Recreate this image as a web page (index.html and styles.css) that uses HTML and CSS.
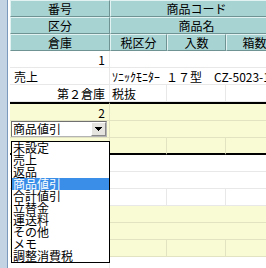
FILE: index.html
```html
<!DOCTYPE html>
<html lang="ja">
    <head>
        <meta charset="UTF-8">
        <meta name="viewport" content="width=device-width, initial-scale=1.0">
        <title>伝票明細</title>
        <link rel="stylesheet" href="styles.css">
    </head>
    <body>
        <div class="page">
            <div class="side"></div>
            <div class="main">
                <table class="grid">
                    <colgroup>
                        <col class="col-a">
                        <col class="col-b">
                        <col class="col-c">
                        <col class="col-d">
                    </colgroup>
                    <thead>
                        <tr>
                            <th>番号</th>
                            <th colspan="3">商品コード</th>
                        </tr>
                        <tr>
                            <th>区分</th>
                            <th colspan="3">商品名</th>
                        </tr>
                        <tr>
                            <th>倉庫</th>
                            <th>税区分</th>
                            <th>入数</th>
                            <th>箱数</th>
                        </tr>
                    </thead>

                    <tbody class="rec">
                        <tr>
                            <td class="first right">1</td>
                            <td colspan="3"></td>
                        </tr>
                        <tr>
                            <td class="first">売上</td>
                            <td colspan="3">ｿﾆｯｸﾓﾆﾀｰ&ensp;１７型&#x3000;CZ-5023-1</td>
                        </tr>
                        <tr>
                            <td class="first right">第２倉庫</td>
                            <td class="line">税抜</td>
                            <td class="line"></td>
                            <td></td>
                        </tr>
                    </tbody>

                    <tbody class="rec alt current">
                        <tr class="top">
                            <td class="first right">2</td>
                            <td colspan="3"></td>
                        </tr>
                        <tr>
                            <td class="first">
                                <div class="combo">
                                    <div class="combo-text">商品値引</div>
                                    <div class="combo-btn">
                                        <svg width="7" height="4" viewBox="0 0 7 4">
                                            <rect x="0" y="0" width="7" height="1"/>
                                            <rect x="1" y="1" width="5" height="1"/>
                                            <rect x="2" y="2" width="3" height="1"/>
                                            <rect x="3" y="3" width="1" height="1"/>
                                        </svg>
                                    </div>
                                    <ul class="options">
                                        <li>未設定</li>
                                        <li>売上</li>
                                        <li>返品</li>
                                        <li class="on">商品値引</li>
                                        <li>合計値引</li>
                                        <li>立替金</li>
                                        <li>運送料</li>
                                        <li>その他</li>
                                        <li>メモ</li>
                                        <li>調整消費税</li>
                                    </ul>
                                </div>
                            </td>
                            <td colspan="3"></td>
                        </tr>
                        <tr class="bottom">
                            <td class="first"></td>
                            <td class="line"></td>
                            <td class="line"></td>
                            <td></td>
                        </tr>
                    </tbody>

                    <tbody class="rec">
                        <tr>
                            <td class="first"></td>
                            <td colspan="3"></td>
                        </tr>
                        <tr>
                            <td class="first"></td>
                            <td colspan="3"></td>
                        </tr>
                        <tr>
                            <td class="first"></td>
                            <td class="line"></td>
                            <td class="line"></td>
                            <td></td>
                        </tr>
                    </tbody>

                    <tbody class="rec alt">
                        <tr>
                            <td class="first"></td>
                            <td colspan="3"></td>
                        </tr>
                        <tr>
                            <td class="first"></td>
                            <td colspan="3"></td>
                        </tr>
                        <tr>
                            <td class="first"></td>
                            <td class="line"></td>
                            <td class="line"></td>
                            <td></td>
                        </tr>
                    </tbody>

                    <tbody class="rec">
                        <tr>
                            <td class="first"></td>
                            <td colspan="3"></td>
                        </tr>
                        <tr>
                            <td class="first"></td>
                            <td colspan="3"></td>
                        </tr>
                    </tbody>
                </table>
            </div>
        </div>
    </body>
</html>
```

FILE: styles.css
```css
* {
    margin: 0;
    padding: 0;
    box-sizing: border-box;
}

html, body {
    overflow: hidden;
}

body {
    background-color: white;
    font-family: "Noto Sans CJK JP", "Noto Sans", sans-serif;
    font-size: 12px;
    color: black;
}

.page {
    display: flex;
    min-height: 268px;
}

.side {
    flex-shrink: 0;
    width: 8px;
    background-color: #c4d3e4;
    border-right: 1px solid #7b98bd;
}

.main {
    padding-left: 2px;
}

.grid {
    border-collapse: separate;
    border-spacing: 0;
    table-layout: fixed;
    width: 273px;
    font-size: 12px;

    tr {
        height: 17px;
    }

    th {
        font-weight: normal;
        line-height: 15px;
        text-align: center;
        background-color: #a8d3d3;
        border-top: 1px solid #e2f1f1;
        border-left: 1px solid #e2f1f1;
        border-right: 1px solid #6f9393;
        border-bottom: 1px solid #6f9393;
        white-space: nowrap;
    }

    td {
        line-height: 15px;
        padding: 0 2px;
        border-bottom: 1px solid rgba(0, 0, 0, 0.09);
        white-space: nowrap;
    }
}

.col-a { width: 100px; }
.col-b { width: 57px; }
.col-c { width: 59px; }
.col-d { width: 57px; }

.grid td.first {
    padding: 0 4px;
    border-right: 1px solid rgba(0, 0, 0, 0.09);
}

.grid td.line {
    border-right: 1px solid rgba(0, 0, 0, 0.09);
}

.grid td.right {
    text-align: right;
}

.rec.alt tr {
    background-color: #f9fbd5;
}

.current {
    tr.top {
        height: 19px;
    }

    tr.top td {
        border-top: 2px solid black;
    }

    tr.bottom td {
        border-bottom: 2px solid black;
    }
}

.grid td:has(.combo) {
    padding: 0 0 0 1px;
}

.combo {
    position: relative;
    display: flex;
    width: 96px;
    height: 16px;
    background-color: white;
    border: 1px solid;
    border-color: #707070 #b4b4b4 #b4b4b4 #707070;
}

.combo-text {
    flex: 1;
    padding-left: 1px;
    line-height: 14px;
}

.combo-btn {
    width: 15px;
    display: flex;
    align-items: center;
    justify-content: center;
    background-color: #e6e4de;
    border: 1px solid;
    border-color: white #8a8a8a #8a8a8a white;
}

.options {
    position: absolute;
    top: 19px;
    left: -1px;
    z-index: 2;
    width: 99px;
    list-style: none;
    background-color: white;
    border: 1px solid black;

    li {
        height: 12px;
        line-height: 12px;
        padding-left: 1px;
        white-space: nowrap;
    }

    li.on {
        background-color: #3a8ee8;
        color: white;
    }
}
```
